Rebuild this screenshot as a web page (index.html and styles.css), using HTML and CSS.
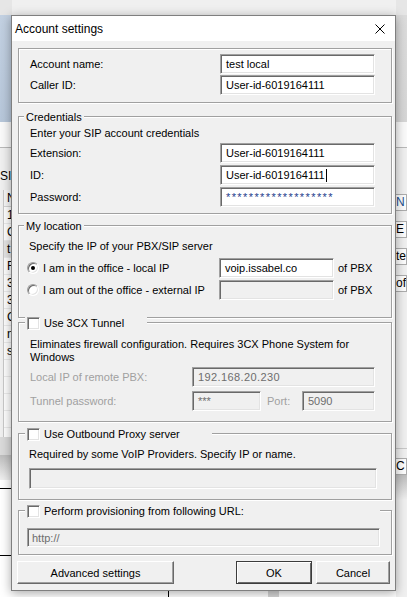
FILE: index.html
```html
<!DOCTYPE html>
<html lang="en">
<head>
    <meta charset="UTF-8">
    <meta name="viewport" content="width=device-width, initial-scale=1.0">
    <title>Account settings</title>
    <link rel="stylesheet" href="styles.css">
</head>
<body>
    <!-- the phone app window behind the dialog -->
    <div class="app">
        <div class="side">
            <div class="strip-top"></div>
            <div class="ribbon"></div>
            <div class="pane"></div>
            <div class="tabbar"><span>SIP</span></div>
            <div class="list">
                <div class="list-head">N</div>
                <div class="list-row">1</div>
                <div class="list-row">C</div>
                <div class="list-row sel">t</div>
                <div class="list-row">F</div>
                <div class="list-row">3</div>
                <div class="list-row">3</div>
                <div class="list-row">C</div>
                <div class="list-row">n</div>
                <div class="list-row">s</div>
                <div class="list-row"></div>
                <div class="list-row"></div>
                <div class="list-row"></div>
                <div class="list-row"></div>
            </div>
            <div class="scroll"></div>
            <div class="shade"></div>
            <div class="desk">
                <div class="hline first"></div>
                <div class="hline second"></div>
            </div>
        </div>

        <div class="under">
            <div class="under-strip">
                <div class="vline"></div>
                <div class="vblock"></div>
            </div>
        </div>

        <div class="side">
            <div class="strip-top"></div>
            <div class="toolbar"></div>
            <div class="pane"></div>
            <div class="side-btn blue first">N</div>
            <div class="side-btn">E</div>
            <div class="side-btn">ter</div>
            <div class="side-btn">oft</div>
            <div class="side-fill"></div>
            <div class="side-btn last">C</div>
            <div class="shade"></div>
            <div class="side-rest"></div>
        </div>
    </div>

    <div class="dialog">
        <div class="titlebar">
            <span class="title">Account settings</span>
            <svg class="close" width="10" height="10" viewBox="0 0 10 10">
                <path d="M0.5 0.5 L9.5 9.5 M9.5 0.5 L0.5 9.5" stroke="#000" stroke-width="1" fill="none"/>
            </svg>
        </div>

        <div class="dlg-body">
            <div class="group g-account">
                <div class="row">
                    <label>Account name:</label>
                    <div class="field">test local</div>
                </div>
                <div class="row">
                    <label>Caller ID:</label>
                    <div class="field">User-id-6019164111</div>
                </div>
            </div>

            <div class="group g-cred">
                <span class="legend">Credentials</span>
                <p class="hint">Enter your SIP account credentials</p>
                <div class="rows">
                    <div class="row">
                        <label>Extension:</label>
                        <div class="field">User-id-6019164111</div>
                    </div>
                    <div class="row">
                        <label>ID:</label>
                        <div class="field">User-id-6019164111<span class="caret"></span></div>
                    </div>
                    <div class="row">
                        <label>Password:</label>
                        <div class="field pass">*******************</div>
                    </div>
                </div>
            </div>

            <div class="group g-loc">
                <span class="legend">My location</span>
                <p class="hint">Specify the IP of your PBX/SIP server</p>
                <div class="rows">
                    <div class="row">
                        <span class="radio on"></span>
                        <label>I am in the office - local IP</label>
                        <div class="field w-loc">voip.issabel.co</div>
                        <span class="suffix">of PBX</span>
                    </div>
                    <div class="row">
                        <span class="radio"></span>
                        <label>I am out of the office - external IP</label>
                        <div class="field w-loc off"></div>
                        <span class="suffix">of PBX</span>
                    </div>
                </div>
            </div>

            <div class="group g-tunnel">
                <span class="legend check-legend w-tunnel"><span class="check"></span>Use 3CX Tunnel</span>
                <p class="hint two-line">Eliminates firewall configuration. Requires 3CX Phone System for<br>Windows</p>
                <div class="rows wide-gap">
                    <div class="row">
                        <label class="dim">Local IP of remote PBX:</label>
                        <div class="field w-ip off">192.168.20.230</div>
                    </div>
                    <div class="row">
                        <label class="dim">Tunnel password:</label>
                        <div class="field w-tpass off">***</div>
                        <span class="port dim">Port:</span>
                        <div class="field w-port off">5090</div>
                    </div>
                </div>
            </div>

            <div class="group g-proxy">
                <span class="legend check-legend w-proxy"><span class="check"></span>Use Outbound Proxy server</span>
                <p class="hint">Required by some VoIP Providers. Specify IP or name.</p>
                <div class="field full tall off"></div>
            </div>

            <div class="group g-prov">
                <span class="legend check-legend w-prov"><span class="check"></span>Perform provisioning from following URL:</span>
                <div class="field full short off">http://</div>
            </div>

            <div class="buttons">
                <button class="btn btn-adv">Advanced settings</button>
                <button class="btn btn-ok">OK</button>
                <button class="btn btn-cancel">Cancel</button>
            </div>
        </div>
    </div>
</body>
</html>
```

FILE: styles.css
```css
* {
    box-sizing: border-box;
}
body {
    margin: 0;
    width: 407px;
    height: 597px;
    overflow: hidden;
    position: relative;
    font-family: "Liberation Sans", Arial, sans-serif;
    font-size: 11px;
    color: #000;
    background: #f0f0f0;
}

/* background window */
.app {
    display: grid;
    grid-template-columns: 12px 1fr 11px;
    height: 597px;
}
.side {
    display: flex;
    flex-direction: column;
    overflow: hidden;
    font-size: 12px;
    white-space: nowrap;
}
.strip-top {
    height: 15px;
    background: #e6e6e6;
}
.ribbon {
    height: 107px;
    background: linear-gradient(#c3d1e2, #b7c7da);
}
.toolbar {
    height: 107px;
    background: linear-gradient(#dcdcdc, #d6d6d6);
}
.pane {
    height: 26px;
    background: #fafafa;
    border-bottom: 1px solid #b9b9b9;
}
.tabbar {
    height: 42px;
    display: flex;
    align-items: flex-end;
    padding-bottom: 7px;
    background: #f0f0f0;
}
.list {
    height: 247px;
    background: #fff;
    border-left: 1px solid #c8c8c8;
    margin-left: 3px;
    overflow: hidden;
}
.list-head {
    height: 17px;
    line-height: 16px;
    padding-left: 3px;
    background: #f7f7f7;
    border-bottom: 1px solid #d5d5d5;
}
.list-row {
    height: 17px;
    line-height: 16px;
    padding-left: 3px;
    border-bottom: 1px solid #ececec;
}
.list-row.sel {
    background: #e5e5e5;
}
.scroll {
    height: 18px;
    background: #dadada;
}
.shade {
    height: 25px;
    background: linear-gradient(#bdbdbd, #f0f0f0);
}
.desk {
    flex: 1;
    background: #fff;
    display: flex;
    flex-direction: column;
}
.hline {
    height: 1px;
    background: #000;
}
.hline.first {
    margin-top: 8px;
}
.hline.second {
    margin-top: 66px;
}
.under {
    display: flex;
    flex-direction: column;
    justify-content: flex-end;
}
.under-strip {
    height: 8px;
    display: flex;
    background: #fff;
}
.vline {
    width: 1px;
    margin-left: 156px;
    background: #000;
}
.vblock {
    width: 11px;
    margin-left: 99px;
    background: #d6d6d6;
}
.side-btn {
    height: 17px;
    line-height: 15px;
    margin-top: 10px;
    background: #fdfdfd;
    border: 1px solid #adadad;
    border-left: none;
    overflow: hidden;
}
.side-btn.first {
    margin-top: 46px;
}
.side-btn.blue {
    color: #1b4f8f;
}
.side-fill {
    height: 157px;
    border-bottom: 1px solid #c9c9c9;
}
.side-btn.last {
    margin-top: 9px;
}
.side-rest {
    flex: 1;
    background: #f0f0f0;
}

/* dialog */
.dialog {
    position: absolute;
    left: 11px;
    top: 15px;
    width: 385px;
    height: 576px;
    background: #f0f0f0;
    border: 1px solid #7f7f7f;
    box-shadow: 0 2px 10px rgba(0, 0, 0, 0.35);
    display: flex;
    flex-direction: column;
}
.titlebar {
    height: 25px;
    flex-shrink: 0;
    background: #fff;
    display: flex;
    align-items: center;
    justify-content: space-between;
    padding: 0 10px 0 3px;
}
.title {
    font-size: 12px;
}
.dlg-body {
    padding: 7px 3px 0 6px;
    display: flex;
    flex-direction: column;
}
.group {
    position: relative;
    border: 1px solid #a0a0a0;
    box-shadow: inset 1px 1px #fff, 1px 1px #fff;
}
.legend {
    position: absolute;
    top: -7px;
    left: 5px;
    line-height: 14px;
    padding: 0 2px;
    background: #f0f0f0;
}
.check-legend {
    display: flex;
    align-items: center;
    gap: 4px;
    left: 6px;
    padding: 0 0 0 2px;
}
.w-tunnel {
    width: 122px;
}
.w-proxy {
    width: 187px;
}
.w-prov {
    width: 355px;
}
.check {
    width: 13px;
    height: 13px;
    background: #fff;
    border: 1px solid;
    border-color: #a0a0a0 #fff #fff #a0a0a0;
    box-shadow: inset 1px 1px #696969, inset -1px -1px #e3e3e3;
}
.hint {
    margin: 0;
    line-height: 14px;
}
.rows {
    display: flex;
    flex-direction: column;
    gap: 2px;
}
.rows.wide-gap {
    gap: 4px;
}
.row {
    display: flex;
    align-items: center;
    height: 20px;
}
.row label {
    flex: 1;
    white-space: nowrap;
}
.field {
    width: 155px;
    height: 20px;
    display: flex;
    align-items: center;
    padding-left: 5px;
    background: #fff;
    border: 1px solid;
    border-color: #a0a0a0 #fff #fff #a0a0a0;
    box-shadow: inset 1px 1px #696969, inset -1px -1px #e3e3e3;
    white-space: nowrap;
    overflow: hidden;
}
.field.off {
    background: #f0f0f0;
    color: #6d6d6d;
}
.field.pass {
    color: #1f3d8c;
    letter-spacing: 1.4px;
    align-items: flex-start;
    padding-top: 3px;
}
.caret {
    width: 1px;
    height: 13px;
    margin-left: 1px;
    background: #000;
}
.dim {
    color: #a0a0a0;
}

.g-account {
    padding: 5px 16px 7px 11px;
    display: flex;
    flex-direction: column;
    gap: 1px;
}
.g-cred {
    margin-top: 13px;
    padding: 9px 16px 6px 11px;
}
.g-cred .hint {
    margin-bottom: 3px;
}
.g-loc {
    margin-top: 11px;
    padding: 13px 13px 17px 8px;
}
.g-loc .hint {
    margin: 0 0 5px 2px;
}
.radio {
    width: 12px;
    height: 12px;
    margin-right: 4px;
    border-radius: 50%;
    background: #fff;
    border: 1px solid;
    border-color: #a0a0a0 #fff #fff #a0a0a0;
    box-shadow: inset 1px 1px #696969, inset -1px -1px #e3e3e3;
    display: flex;
    align-items: center;
    justify-content: center;
}
.radio.on::after {
    content: "";
    width: 4px;
    height: 4px;
    border-radius: 50%;
    background: #000;
}
.w-loc {
    width: 115px;
}
.suffix {
    width: 40px;
    margin-left: 4px;
}
.g-tunnel {
    margin-top: 4px;
    padding: 15px 16px 10px 11px;
}
.hint.two-line {
    line-height: 13px;
    margin-bottom: 3px;
}
.w-ip {
    width: 183px;
    letter-spacing: 0.4px;
}
.w-tpass {
    width: 69px;
}
.port {
    width: 41px;
    padding-left: 6px;
}
.w-port {
    width: 73px;
}
.g-proxy {
    margin-top: 11px;
    padding: 13px 14px 10px 10px;
}
.g-proxy .hint {
    margin-bottom: 7px;
}
.field.full {
    width: 100%;
}
.field.tall {
    height: 21px;
}
.field.short {
    height: 19px;
    padding-left: 4px;
}
.g-prov {
    margin-top: 10px;
    padding: 17px 11px 7px 8px;
}

.buttons {
    display: flex;
    margin: 6px 0 0 -1px;
}
.btn {
    height: 23px;
    padding: 0;
    font-family: "Liberation Sans", Arial, sans-serif;
    font-size: 11px;
    color: #000;
    background: #f0f0f0;
    border: 1px solid;
    border-color: #fff #696969 #696969 #fff;
    box-shadow: inset -1px -1px #a0a0a0;
}
.btn-adv {
    width: 157px;
}
.btn-ok {
    width: 76px;
    margin-left: auto;
    border-color: #3c3c3c;
    box-shadow: inset 1px 1px #fff, inset -1px -1px #696969;
}
.btn-cancel {
    width: 74px;
    margin: 0 2px 0 4px;
}
```
